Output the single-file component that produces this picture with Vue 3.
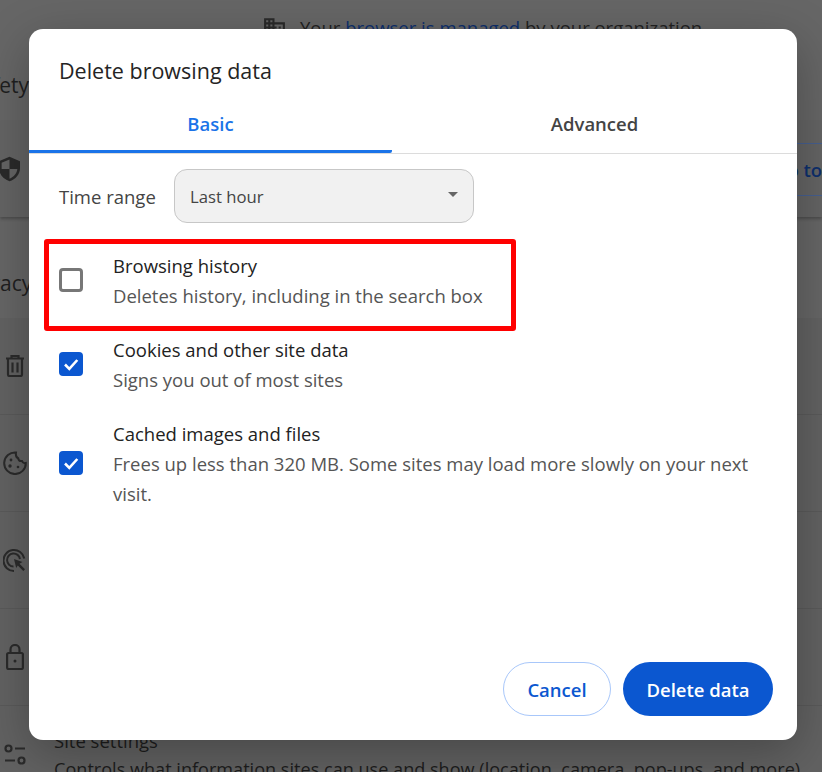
<script setup>
const rows = [
  { id: 'history', title: 'Browsing history', desc: 'Deletes history, including in the search box', checked: false },
  { id: 'cookies', title: 'Cookies and other site data', desc: 'Signs you out of most sites', checked: true },
  { id: 'cache', title: 'Cached images and files', desc: 'Frees up less than 320 MB. Some sites may load more slowly on your next visit.', checked: true },
]
</script>

<template>
  <div class="page">
    <div class="backdrop">
      <div class="notice">
        <svg class="notice-icon" viewBox="0 0 24 24"><path d="M2 21V3h10v4h10v14H2zm2-2h2v-2H4v2zm0-4h2v-2H4v2zm0-4h2V9H4v2zm0-4h2V5H4v2zm4 12h2v-2H8v2zm0-4h2v-2H8v2zm0-4h2V9H8v2zm0-4h2V5H8v2zm4 12h8V9h-8v2h2v2h-2v2h2v2h-2v2zm4-6v-2h2v2h-2zm0 4v-2h2v2h-2z"/></svg>
        <span>Your <span class="link">browser is managed</span> by your organization</span>
      </div>
      <h2 class="heading safety">Safety check</h2>
      <section class="card safety-card">
        <svg class="shield" viewBox="0 0 24 28"><path fill-rule="evenodd" d="M12 0 24 5v8c0 7-5 12.500-12 15C5 25.500 0 20 0 13V5L12 0zM12 3 3 6.800V14h9V3zm0 11v11c5-2 8.500-6 9-11h-9z"/></svg>
        <span class="go-btn">Go to Safety Check</span>
      </section>
      <h2 class="heading privacy">Privacy and security</h2>
      <section class="card list">
        <div class="list-row">
          <svg class="icon trash" viewBox="0 0 18 22" fill="none" stroke="currentColor" stroke-width="2.200"><path d="M0 3.500h18M5.500 3V1h7v2M2 4v15.500a1.500 1.500 0 0 0 1.500 1.500h11a1.500 1.500 0 0 0 1.500-1.500V4M6.500 7.500v10M11.500 7.500v10"/></svg>
        </div>
        <div class="list-row">
          <svg class="icon cookie" viewBox="0 0 24 24" fill="none" stroke="currentColor" stroke-width="2"><path d="M13 1.500a10.800 10.800 0 1 0 9.800 10.500c-1.800.5-3.300-.4-3.800-2-1.900.3-3.500-.9-3.800-2.700-1.500-.6-2.600-3-2.200-5.800z"/><circle cx="8" cy="9" r="1.400" fill="currentColor" stroke="none"/><circle cx="7" cy="15" r="1.700" fill="currentColor" stroke="none"/><circle cx="15" cy="16" r="1.300" fill="currentColor" stroke="none"/></svg>
        </div>
        <div class="list-row">
          <svg class="icon target" viewBox="0 0 25 24" fill="none" stroke="currentColor" stroke-width="2"><path d="M11 23a10.500 10.500 0 1 1 10.300-12.500"/><path d="M10.500 18.500a6.500 6.500 0 1 1 6.500-7.500"/><path fill="currentColor" stroke="none" d="M11 11 19.500 14 16.500 15.800 22 21.300 20.300 23 14.800 17.500 13.200 20z"/></svg>
        </div>
        <div class="list-row">
          <svg class="icon lock" viewBox="0 0 18 26" fill="none" stroke="currentColor" stroke-width="2.200"><rect x="1.100" y="9" width="15.800" height="16" rx="1.500"/><path d="M4.500 9V5.500a4.500 4.500 0 0 1 9 0V9"/><circle cx="9" cy="17" r="1.500" fill="currentColor" stroke="none"/></svg>
        </div>
        <div class="list-row site-row">
          <svg class="icon sliders" viewBox="0 0 22 22" fill="none" stroke="currentColor" stroke-width="2.200"><circle cx="4.500" cy="4.500" r="3"/><path d="M11 4.500h10M1 16.500h10"/><circle cx="17.500" cy="16.500" r="3"/></svg>
          <div class="site-text">
            <div>Site settings</div>
            <div class="site-desc">Controls what information sites can use and show (location, camera, pop-ups, and more)</div>
          </div>
        </div>
      </section>
    </div>

    <div class="dialog">
      <h1 class="title">Delete browsing data</h1>
      <div class="tabs">
        <div class="tab active">Basic</div>
        <div class="tab">Advanced</div>
      </div>
      <div class="body">
        <div class="range">
          <span class="range-label">Time range</span>
          <div class="select">
            <span>Last hour</span>
            <span class="caret"></span>
          </div>
        </div>
        <div v-for="row in rows" :key="row.id" class="option">
          <span class="box" :class="{ checked: row.checked }">
            <svg v-if="row.checked" viewBox="0 0 24 24" fill="none" stroke="#fff" stroke-width="2.600"><path d="M6 12.500 10.300 16.800 18.300 8"/></svg>
          </span>
          <div class="option-text">
            <div class="option-title">{{ row.title }}</div>
            <div class="option-desc">{{ row.desc }}</div>
          </div>
        </div>
      </div>
      <div class="actions">
        <button class="btn cancel">Cancel</button>
        <button class="btn confirm">Delete data</button>
      </div>
    </div>

    <div class="highlight"></div>
  </div>
</template>

<style scoped>
.page {
  position: relative;
  width: 822px;
  height: 772px;
  overflow: hidden;
  background: #666;
  font-family: "Open Sans", "Noto Sans", sans-serif;
  color: #1d1d1d;
}
.backdrop { font-size: 18.5px; height: 772px; }
.notice {
  display: flex;
  align-items: center;
  height: 31px;
  padding: 12px 0 0 262px;
  gap: 13px;
  color: #222;
  white-space: nowrap;
}
.notice-icon { width: 25px; height: 25px; fill: #2a2a2a; flex: none; }
.link { color: #0d2f6c; }
.heading { margin: 0; font-size: 21px; font-weight: 400; white-space: nowrap; color: #1f1f1f; }
.safety { height: 78px; padding-top: 28px; box-sizing: border-box; margin-left: -31px; line-height: 28px; }
.card { background: #646464; box-shadow: 0 2px 3px rgba(0,0,0,.25); }
.safety-card {
  height: 96px;
  display: flex;
  align-items: center;
  white-space: nowrap;
}
.shield { width: 21px; height: 28px; fill: #2a2a2a; margin-left: -1px; flex: none; }
.go-btn {
  height: 53px;
  line-height: 51px;
  margin-left: 729px;
  padding: 0 24px;
  box-sizing: border-box;
  border: 1px solid #465f8f;
  border-radius: 27px;
  color: #0d2f6c;
  font-weight: 600;
  flex: none;
}
.privacy { height: 101px; padding-top: 52px; box-sizing: border-box; margin-left: -37px; line-height: 28px; }
.list { box-shadow: none; background: #626262; }
.list-row {
  height: 97px;
  box-sizing: border-box;
  border-bottom: 1px solid #5a5a5a;
  display: flex;
  align-items: center;
  color: #2a2a2a;
}
.icon { flex: none; color: #2b2b2b; }
.trash { width: 18px; height: 22px; margin-left: 6px; }
.cookie { width: 24px; height: 24px; margin-left: 3px; }
.target { width: 25px; height: 24px; margin-left: 3px; }
.lock { width: 18px; height: 26px; margin-left: 6px; }
.site-row { border: 0; align-items: flex-start; gap: 28px; }
.sliders { width: 22px; height: 22px; margin: 38px 0 0 4px; }
.site-text { color: #1d1d1d; line-height: 28px; padding-top: 21px; white-space: nowrap; }
.site-desc { font-size: 18.1px; }

.dialog {
  position: absolute;
  left: 29px;
  top: 29px;
  width: 768px;
  height: 711px;
  background: #fff;
  border-radius: 14px;
  box-shadow: 0 14px 50px rgba(0,0,0,.28);
  display: flex;
  flex-direction: column;
}
.title {
  margin: 0;
  padding: 27px 30px 0;
  font-size: 21.5px;
  line-height: 30px;
  font-weight: 400;
  color: #242424;
}
.tabs {
  display: grid;
  grid-template-columns: 363px 405px;
  margin-top: 9px;
  border-bottom: 1px solid #dcdcdc;
  height: 59px;
  box-sizing: border-box;
}
.tab {
  text-align: center;
  font-size: 18.5px;
  font-weight: 600;
  line-height: 58px;
  height: 58px;
  box-sizing: border-box;
  color: #444;
}
.tab.active {
  color: #1a73e8;
  border-bottom: 3px solid #1a73e8;
  border-bottom-right-radius: 2px;
}
.body { padding: 15px 30px 0; flex: 1; font-size: 18.5px; }
.range { display: flex; align-items: center; height: 54px; color: #444; }
.range-label { width: 115px; flex: none; }
.select {
  width: 300px;
  height: 54px;
  box-sizing: border-box;
  background: #f1f1f1;
  border: 1px solid #c7c7c7;
  border-radius: 13px;
  display: flex;
  align-items: center;
  justify-content: space-between;
  padding: 0 15px;
  color: #444;
  font-size: 16.7px;
}
.caret {
  width: 0;
  height: 0;
  border-left: 5.5px solid transparent;
  border-right: 5.5px solid transparent;
  border-top: 5px solid #666;
  margin-top: -3px;
}
.option {
  display: flex;
  align-items: center;
  gap: 30px;
  margin-bottom: 24px;
  line-height: 30px;
}
.range + .option { margin-top: 28px; }
.box {
  width: 24px;
  height: 24px;
  box-sizing: border-box;
  border: 3px solid #777;
  border-radius: 4px;
  flex: none;
  background: #fff;
  margin-bottom: 2px;
}
.box.checked { background: #0b57d0; border: 0; }
.box svg { display: block; width: 24px; height: 24px; }
.option-title { color: #222; }
.option-desc { color: #555; }
.actions {
  display: flex;
  justify-content: flex-end;
  gap: 12px;
  padding: 0 24px 24px;
}
.btn {
  height: 54px;
  border-radius: 27px;
  font-family: inherit;
  font-size: 18.5px;
  font-weight: 600;
  cursor: pointer;
  box-sizing: border-box;
}
.cancel { width: 108px; background: #fff; border: 1px solid #a8c7fa; color: #0b57d0; }
.confirm { width: 150px; background: #0b57d0; border: 0; color: #fff; }
.highlight {
  position: absolute;
  left: 44px;
  top: 239px;
  width: 472px;
  height: 92px;
  box-sizing: border-box;
  border: 5px solid #ff0000;
  border-radius: 3px;
}
</style>
